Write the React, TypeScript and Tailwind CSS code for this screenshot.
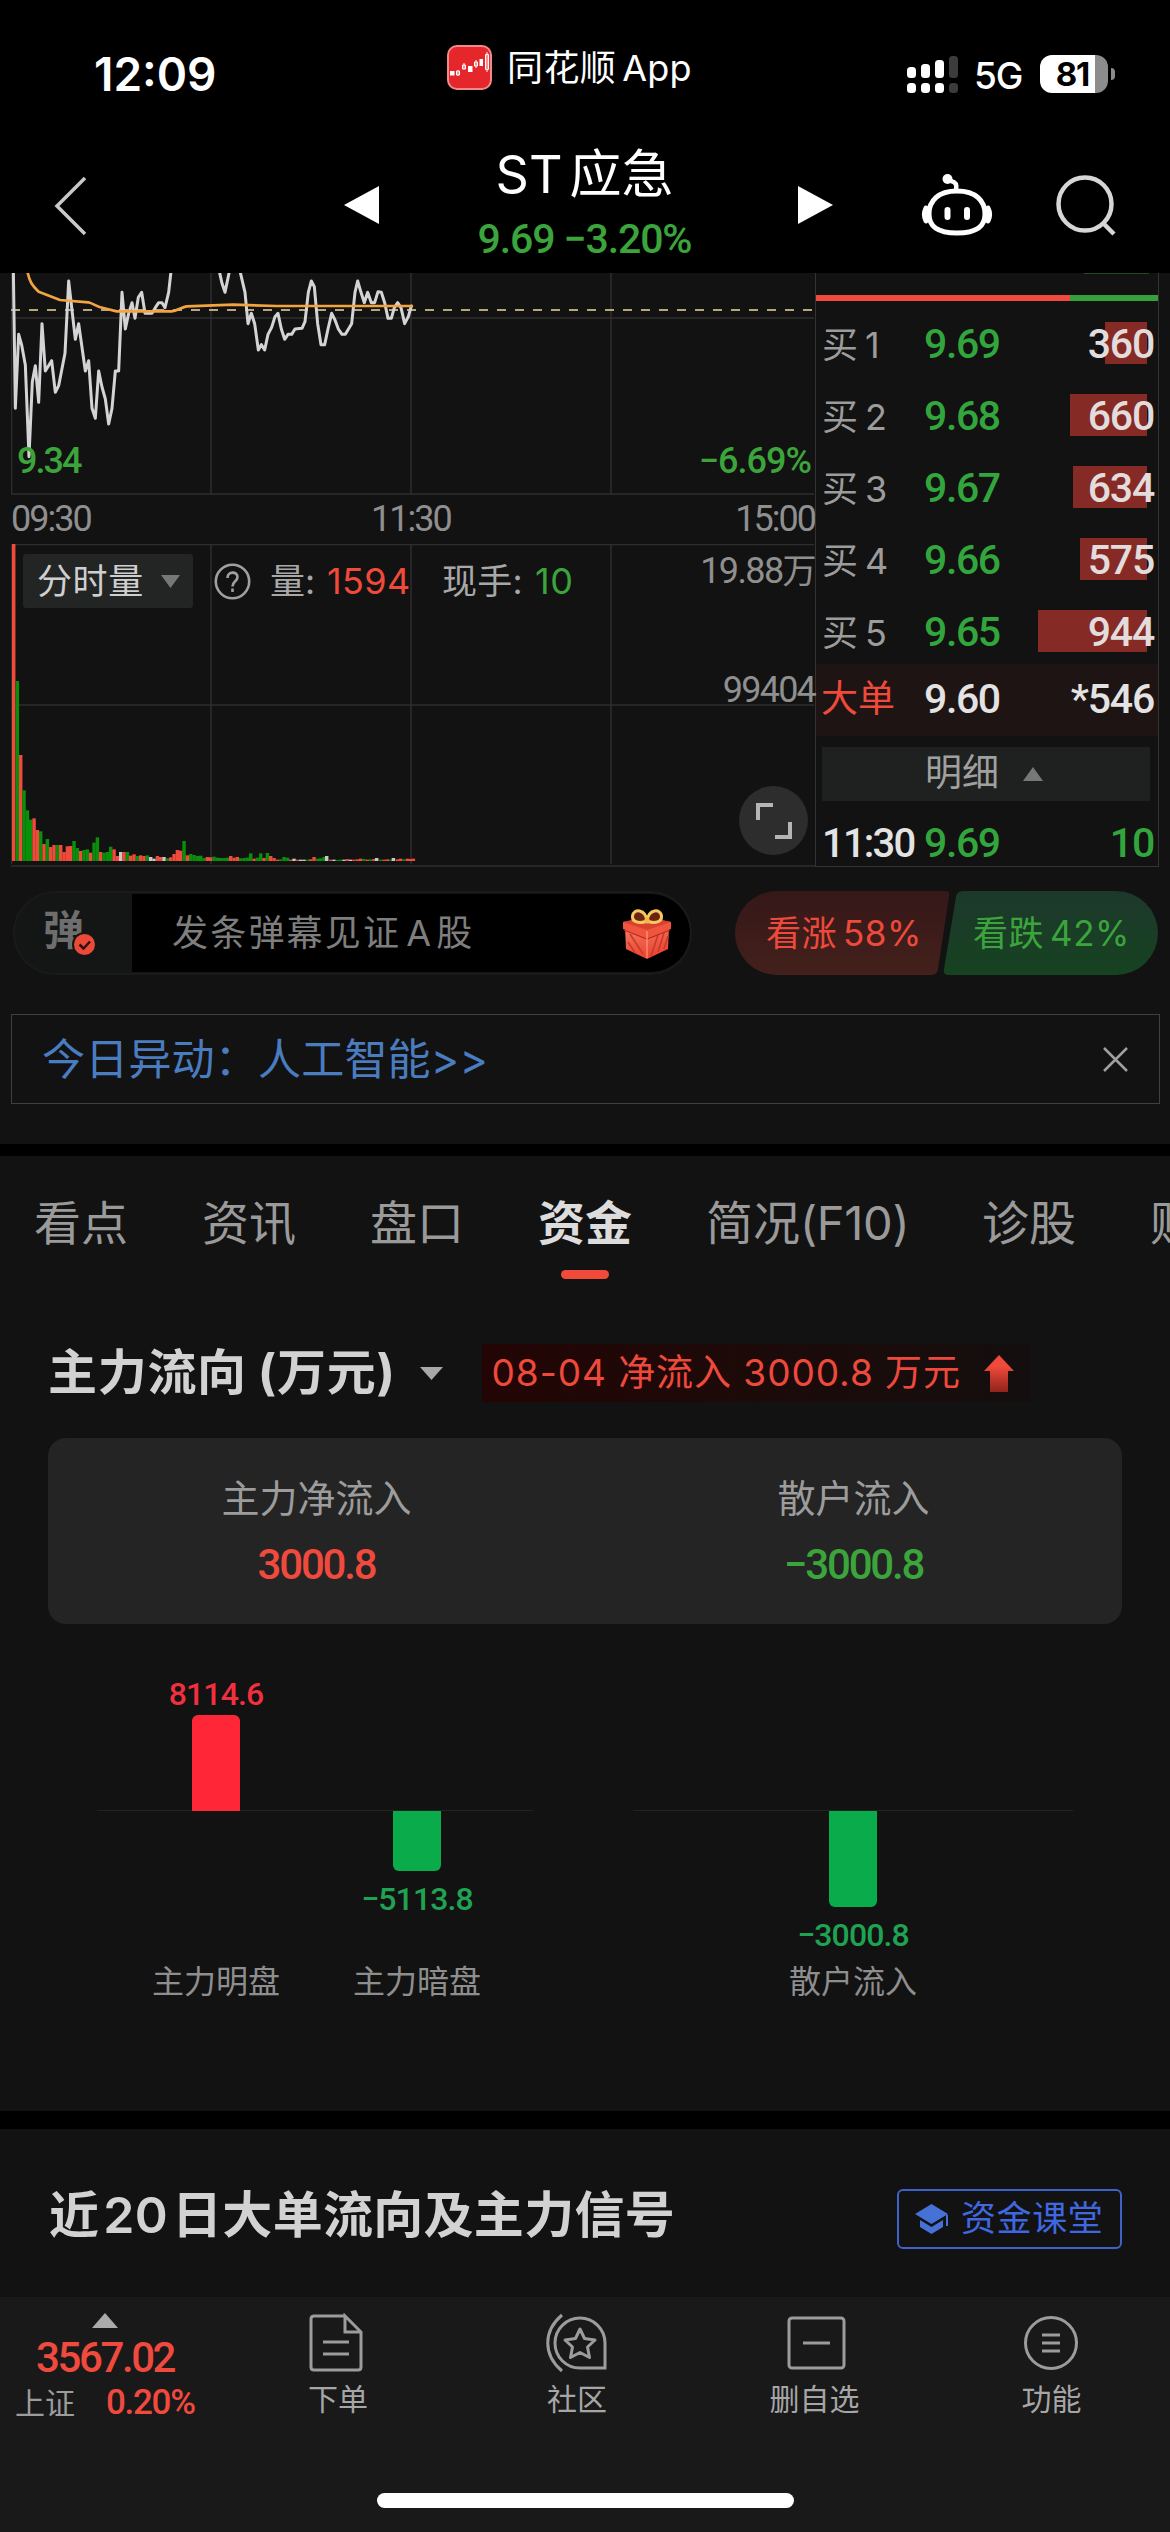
import type { ReactNode } from "react";

const CJK = "font-['Inter','Noto_Sans_CJK_SC',sans-serif]";
const NUM = "font-['Roboto','Noto_Sans_CJK_SC',sans-serif]";

const bids = [
  { n: "1", price: "9.69", vol: "360", bar: "w-[42px]" },
  { n: "2", price: "9.68", vol: "660", bar: "w-[77px]" },
  { n: "3", price: "9.67", vol: "634", bar: "w-[74px]" },
  { n: "4", price: "9.66", vol: "575", bar: "w-[67px]" },
  { n: "5", price: "9.65", vol: "944", bar: "w-[109px]" },
];

const R = "#f04a3a";
const G = "#0a8f0a";
const W = "#c8c8c8";

/* Minute volume bars: [left edge, top edge, colour] on a grid three times finer than the page */
const volume: [number, number, string][] = [
  [36, 42, R], [47, 453, G], [57, 675, R], [67, 781, G], [77, 841, G], [87, 869, G], [97, 865, R], [107, 900, R],
  [117, 904, G], [127, 942, R], [137, 927, G], [147, 951, R], [157, 945, R], [167, 945, G], [177, 945, R], [187, 966, R],
  [197, 949, R], [207, 948, R], [217, 933, G], [227, 954, G], [237, 963, R], [247, 960, G], [257, 958, G], [267, 968, R],
  [277, 938, G], [287, 922, G], [297, 966, R], [307, 968, G], [317, 966, G], [327, 950, G], [337, 958, R], [347, 978, R],
  [357, 966, W], [367, 966, R], [377, 966, G], [387, 977, R], [397, 973, R], [407, 978, G], [417, 976, R], [427, 978, R],
  [437, 976, G], [447, 981, W], [457, 986, W], [467, 978, R], [477, 981, R], [487, 981, W], [497, 985, G], [507, 982, R],
  [517, 972, R], [527, 960, R], [537, 962, R], [547, 933, G], [557, 976, R], [567, 972, G], [577, 975, G], [587, 978, G],
  [597, 977, G], [607, 984, G], [617, 981, R], [627, 982, R], [637, 980, G], [647, 983, G], [657, 984, G], [667, 984, G],
  [677, 983, G], [687, 978, R], [697, 983, R], [707, 981, R], [717, 985, G], [727, 984, G], [737, 983, G], [747, 970, G],
  [757, 986, R], [767, 983, G], [777, 970, G], [787, 984, R], [797, 969, G], [807, 978, R], [817, 984, R], [827, 989, R],
  [837, 988, G], [847, 981, G], [857, 983, G], [867, 989, R], [877, 986, W], [887, 989, R], [897, 989, W], [907, 989, W],
  [917, 989, G], [927, 988, R], [937, 981, R], [947, 986, G], [957, 985, G], [967, 981, G], [975, 978, W], [987, 989, R],
  [997, 989, W], [1007, 990, G], [1017, 989, G], [1027, 989, W], [1037, 987, R], [1047, 989, W], [1057, 989, R], [1067, 988, R],
  [1077, 986, R], [1087, 987, G], [1097, 989, R], [1107, 988, G], [1117, 987, R], [1125, 984, W], [1137, 989, G], [1147, 989, R],
  [1157, 988, R], [1167, 989, G], [1175, 984, W], [1187, 988, R], [1197, 986, R], [1207, 988, G], [1217, 986, R], [1227, 987, R],
  [1235, 986, R],
];

function StatusBar() {
  return (
    <div className="flex h-[136px] items-start bg-black text-white">
      <div className={`${CJK} ml-[94px] mt-[47px] w-[353px] text-[46px] font-semibold leading-[54px]`}>12:09</div>
      <svg className="mt-[45px] h-[45px] w-[45px]" viewBox="0 0 45 45">
        <rect x="1" y="1" width="43" height="43" rx="9" fill="#e5262b" stroke="#ef8a88" strokeWidth="2" />
        <g stroke="#fff" strokeWidth="1" fill="none">
          <path d="M11 25v6M17 18v6M29 15v8M40 7v20" />
          <path d="M9.500 26h3v4h-3zM15.500 20h3v4h-3zM27.500 17h3v4h-3zM38.500 9.500h3v15h-3z" />
        </g>
        <g fill="#fff"><rect x="3" y="26" width="4.500" height="4.500" /><rect x="21" y="21" width="4.500" height="6" /><rect x="32.500" y="14" width="3.500" height="7" /></g>
      </svg>
      <div className={`${CJK} ml-[15px] mt-[46px] w-[400px] text-[36px] leading-[44px] tracking-[0.4px]`}>同花顺<span className="ml-[6px] tracking-[0.2px]">App</span></div>
      <svg className="mt-[55px] h-[39px] w-[52px]" viewBox="0 0 52 39">
        <g fill="#fff">
          <rect x="0" y="12" width="9" height="11" rx="3.500" /><rect x="14" y="9" width="9" height="14" rx="3.500" /><rect x="28" y="5" width="9" height="18" rx="3.500" />
          <rect x="0" y="28" width="9" height="10" rx="3.500" /><rect x="14" y="28" width="9" height="10" rx="3.500" /><rect x="28" y="28" width="9" height="10" rx="3.500" />
        </g>
        <g fill="#3c3c3c"><rect x="42" y="1" width="9" height="22" rx="3.500" /><rect x="42" y="28" width="9" height="10" rx="3.500" /></g>
      </svg>
      <div className={`${CJK} ml-[15px] mt-[54px] w-[66px] text-[37px] font-medium leading-[44px] tracking-[-1px]`}>5G</div>
      <div className="mt-[55px] flex items-center">
        <div className="flex h-[38px] w-[68px] overflow-hidden rounded-[12px] bg-gradient-to-r from-white from-[81%] to-[#8c8c8c] to-[81%]">
          <span className={`${CJK} w-full pr-[3px] text-center text-[33px] font-bold leading-[38px] tracking-[-1px] text-black`}>81</span>
        </div>
        <div className="ml-[3px] h-[12px] w-[4px] rounded-r-full bg-[#8c8c8c]" />
      </div>
    </div>
  );
}

function NavBar() {
  return (
    <div className="flex h-[137px] items-start bg-black text-white">
      <svg className="ml-[52px] mt-[39px] h-[62px] w-[38px]" viewBox="0 0 38 62" fill="none" stroke="#c9c9c9" strokeWidth="3.500"><path d="M33 3 5 31l28 28" /></svg>
      <svg className="ml-[254px] mt-[50px] h-[38px] w-[35px]" viewBox="0 0 35 38"><path d="M35 0v38L0 19z" fill="#fff" /></svg>
      <div className="flex w-[419px] flex-col items-center pr-[8px]">
        <div className={`${CJK} mt-[8px] flex items-center text-[52px] leading-[62px]`}><span className="mr-[7px]">ST</span>应急</div>
        <div className={`${NUM} mt-[9px] text-[41px] font-medium leading-[48px] tracking-[-1.1px] text-[#3ba53c]`}>9.69 −3.20%</div>
      </div>
      <svg className="mt-[50px] h-[38px] w-[35px]" viewBox="0 0 35 38"><path d="M0 0v38l35-19z" fill="#fff" /></svg>
      <svg className="ml-[87px] mt-[36px] h-[66px] w-[74px]" viewBox="0 0 74 66" fill="none" stroke="#fff" strokeLinecap="round">
        <path strokeWidth="5" d="M37 19C18 19 9 29 9 42S18 61 37 61 65 55 65 42 56 19 37 19Z" />
        <path strokeWidth="4.500" d="M36 18c1-5 0-8-5-9" />
        <circle cx="27.500" cy="7" r="5" fill="#fff" stroke="none" />
        <path strokeWidth="5" d="M6 36c-2 4-2 9 0 13M68 36c2 4 2 9 0 13" />
        <path strokeWidth="6" d="M27.500 38v7M47 38v7" />
      </svg>
      <svg className="ml-[60px] mt-[38px] h-[64px] w-[64px]" viewBox="0 0 64 64" fill="none" stroke="#d6d6d6" strokeWidth="4.500"><circle cx="31" cy="30" r="26.500" /><path d="m49 49 11 11" /></svg>
    </div>
  );
}

function PriceChart() {
  return (
    <div className="relative h-[222px] w-[804px]">
      <svg className="h-full w-full" viewBox="11 273 804 222">
        <path stroke="#2e2e2e" strokeWidth="1.500" fill="none" d="M11.500 273V494H814M211 273V494M411 273V494M611 273V494M11 318H814" />
        <path stroke="#b8a67c" strokeWidth="2" strokeDasharray="9 9" d="M11 310H814" />
        <g transform="translate(0 265) scale(.33333)" fill="none" strokeLinejoin="round" strokeLinecap="round">
          <path stroke="#d4d4d6" strokeWidth="9" d="M40 10 46 430 56 208 65 240 76 300 87 575 97 350 106 302 116 412 126 176 136 318 155 287 166 382 176 362 195 265 206 48 226 223 236 176 256 318 266 287 276 430 286 460 296 318 306 366 316 402 326 477 336 430 346 318 356 318 366 82 376 192 386 145 396 113 405 160 415 97 425 82 435 145 456 145 466 128 476 113 486 113 495 128 506 82 514 10M656 10 666 55 675 82 690 10M718 10 735 82 744 176 754 145 764 176 775 255 784 239 794 255 804 208 815 187 825 155 834 145 844 192 854 223 864 208 875 208 885 192 906 190 915 170 925 82 934 48 943 65 953 176 963 239 974 239 984 192 995 145 1005 165 1015 192 1026 208 1036 208 1055 176 1065 82 1073 48 1083 82 1093 113 1103 82 1114 113 1124 113 1134 80 1144 82 1154 113 1164 160 1174 160 1183 128 1193 113 1203 128 1214 176 1225 155 1234 123" />
          <path stroke="#f2a440" strokeWidth="8" d="M80 10C88 50 95 60 116 80L180 105 265 112C285 118 290 125 310 129L350 139H515C535 137 545 126 560 124L700 119 830 123H1236" />
        </g>
      </svg>
      <span className={`${NUM} absolute left-[6px] top-[166px] text-[36px] font-medium leading-[44px] tracking-[-2px] text-[#3ba53c]`}>9.34</span>
      <span className={`${NUM} absolute right-[4px] top-[166px] text-[36px] font-medium leading-[44px] tracking-[-1px] text-[#3ba53c]`}>−6.69%</span>
    </div>
  );
}

function VolumeChart() {
  return (
    <div className="relative mt-[1px] h-[323px] w-[804px]">
      <svg className="h-full w-full" viewBox="11 544 804 323">
        <path stroke="#2e2e2e" strokeWidth="1.500" fill="none" d="M11.500 544.500V864M11 544.500H814M11 705H814M11 866H815M211 544V864M411 544V864M611 544V864" />
        <g transform="translate(0 530) scale(.33333)">
          {volume.map(([x, y, c]) => <rect key={x} x={x} y={y} width="10.300" height={993 - y} fill={c} />)}
        </g>
      </svg>
      <div className={`${CJK} absolute left-[12px] top-[10px] flex h-[54px] items-center text-[35px] text-[#9b9b9b]`}>
        <div className="flex h-[54px] w-[170px] items-center rounded-[3px] bg-[#232424] pl-[14px] tracking-[0.6px] text-[#cfcfcf]">
          分时量
          <svg className="ml-[17px] h-[13px] w-[19px]" viewBox="0 0 19 13"><path d="M0 0h19L9.500 13z" fill="#777" /></svg>
        </div>
        <svg className="ml-[21px] h-[37px] w-[37px]" viewBox="0 0 37 37" fill="none" stroke="#a0a0a0" strokeWidth="2.600"><circle cx="18.500" cy="18.500" r="16.700" /><path d="M13.500 15c0-7 10-7 10-1 0 4.500-5 4-5 9.500" /><path d="M18.500 25.500v3.500" /></svg>
        <span className="ml-[19px] w-[57px] text-[#a8a8a8]">量:</span>
        <span className="w-[115px] text-[36px] tracking-[0.4px] text-[#f04a3a]">1594</span>
        <span className="w-[93px] text-[#a8a8a8] tracking-[0.3px]">现手:</span>
        <span className="text-[36px] tracking-[0.5px] text-[#3ba53c]">10</span>
      </div>
      <span className={`${NUM} absolute right-0 top-[5px] text-[36px] leading-[44px] text-[#8f8f8f] tracking-[-1.6px]`}>19.88<span className="text-[34px]">万</span></span>
      <span className={`${NUM} absolute right-0 top-[124px] text-[36px] leading-[44px] text-[#8f8f8f] tracking-[-1.8px]`}>99404</span>
      <div className="absolute right-[7px] top-[242px] flex h-[69px] w-[69px] items-center justify-center rounded-full bg-[#2d2d2d]">
        <svg className="h-[36px] w-[36px]" viewBox="0 0 36 36" fill="none" stroke="#b5b5b5" strokeWidth="4"><path d="M2 17V2h15M34 19v15H19" /></svg>
      </div>
    </div>
  );
}

function OrderBook() {
  return (
    <div className={`${NUM} flex h-[594px] w-[344px] flex-col border-x border-b border-[#333] text-[41px] font-medium`}>
      <div className="ml-[268px] h-[22px] w-[65px] shrink-0 border-t border-[#1e4a24]" />
      <div className="flex h-[6px] shrink-0"><div className="w-[254px] bg-[#f04a3e]" /><div className="flex-1 bg-[#36a13c]" /></div>
      <div className="flex shrink-0 flex-col pt-[6px]">
        {bids.map((b) => (
          <div key={b.n} className="relative flex h-[72px] items-center pt-[3px]">
            <div className={`absolute right-[11px] top-[15px] h-[42px] bg-[#862a25] ${b.bar}`} />
            <span className={`${CJK} ml-[6px] w-[102px] text-[36px] font-normal text-[#9c9c9c]`}>买<span className="ml-[7px]">{b.n}</span></span>
            <span className="tracking-[-1.4px] text-[#32a63c]">{b.price}</span>
            <span className="relative ml-auto mr-[4px] tracking-[-1.2px] text-[#e3dcdc]">{b.vol}</span>
          </div>
        ))}
      </div>
      <div className="mt-[-3px] flex h-[72px] shrink-0 items-center bg-[#1f1414] text-[#e3e3e3]">
        <span className="w-[108px] pl-[5px] text-[37px] font-normal text-[#f04a3a]">大单</span>
        <span className="tracking-[-1.4px]">9.60</span>
        <span className="ml-auto mr-[4px] tracking-[-1.2px]">*546</span>
      </div>
      <div className="ml-[6px] mt-[11px] flex h-[54px] w-[328px] shrink-0 items-center bg-[#1f2020] pl-[103px] text-[37px] font-normal text-[#a0a0a0]">
        明细
        <svg className="ml-[24px] h-[14px] w-[20px]" viewBox="0 0 20 14"><path d="M10 0 20 14H0z" fill="#777" /></svg>
      </div>
      <div className="mt-[18px] flex h-[47px] shrink-0 items-center pt-[3px] text-[#e3e3e3]">
        <span className="w-[108px] pl-[6px] text-[40px] tracking-[-1.8px]">11:30</span>
        <span className="tracking-[-1.4px] text-[#32a63c]">9.69</span>
        <span className="ml-auto mr-[4px] tracking-[-1.2px] text-[#32a63c]">10</span>
      </div>
    </div>
  );
}

function Gift() {
  return (
    <svg className="ml-auto mr-[18px] h-[54px] w-[50px]" viewBox="0 0 50 54">
      <defs><linearGradient id="gift" x1="0" y1="0" x2="0.300" y2="1"><stop offset="0" stopColor="#f67a5c" /><stop offset="1" stopColor="#ea4432" /></linearGradient></defs>
      <path d="M3 21 25 29l22-8-1 22-21 10L4 43z" fill="url(#gift)" />
      <g stroke="#c93a2c" strokeWidth="1.600"><path d="m29 50 7-21M36 46l6-19M42 43l4-13M6 36l7 11M8 28l13 20" /></g>
      <path d="M1 16 25 11l24 5v7l-24 9L1 23z" fill="#f0553f" />
      <path d="M1 16 25 11l24 5-24 8z" fill="#d8412f" />
      <path d="m2 24 23 9 23-9" fill="none" stroke="#b92a20" strokeWidth="1.300" />
      <path d="M25 25v27" stroke="#ff9a80" strokeWidth="1.200" />
      <g fill="#6b2410" stroke="#f6c860" strokeWidth="3"><path d="M25 15C17 18 10 16 10.500 10c1-8 13-7 14.500 5Z" /><path d="M25 15c8 3 15 1 14.500-5-1-8-13-7-14.500 5Z" /></g>
      <rect x="22.500" y="11.500" width="5" height="6" rx="2" fill="#f2b548" />
    </svg>
  );
}

function DanmuRow() {
  return (
    <div className={`${CJK} flex h-[84px] items-center text-[35px]`}>
      <div className="ml-[13px] flex h-[84px] w-[679px] items-center rounded-full border-[2px] border-[#191a1a] bg-[#141515]">
        <div className="relative flex h-full w-[117px] items-center pl-[28px] text-[41px] font-bold text-[#6e6e6e]">
          <span className="relative top-[-2px]">弹</span>
          <svg className="absolute left-[57px] top-[39px] h-[25px] w-[25px]" viewBox="0 0 25 25"><circle cx="12.500" cy="12.500" r="11.500" fill="#ea4a38" stroke="#161616" strokeWidth="2" /><path d="m7.500 12.500 4 4 6.500-7" fill="none" stroke="#301010" strokeWidth="2.500" /></svg>
        </div>
        <div className="flex h-[78px] flex-1 items-center rounded-r-full bg-black pl-[40px] text-[36px] text-[#7e7e7e]">
          <span className="whitespace-nowrap tracking-[2.200px]">发条弹幕见证<span className="ml-[5px] mr-[3px]">A</span>股</span>
          <Gift />
        </div>
      </div>
      <div className="relative ml-[43px] flex h-[84px] w-[423px] items-center">
        <svg className="absolute inset-0" width="423" height="84" viewBox="0 0 423 84">
          <defs>
            <linearGradient id="up" x1="0" y1="0" x2="0" y2="1"><stop offset="0" stopColor="#361819" /><stop offset="1" stopColor="#43201b" /></linearGradient>
            <linearGradient id="down" x1="0" y1="0" x2="0" y2="1"><stop offset="0" stopColor="#1d382b" /><stop offset="1" stopColor="#164321" /></linearGradient>
          </defs>
          <path d="M42 0H210q5 0 4 5L203 78q-1 6-7 6H42a42 42 0 0 1 0-84Z" fill="url(#up)" />
          <path d="M228 0H381a42 42 0 0 1 0 84H213q-5 0-4-6L221 6q1-6 7-6Z" fill="url(#down)" />
        </svg>
        <span className="relative ml-[31px] w-[207px] tracking-[0.5px] text-[#ee4a3c]">看涨<span className="ml-[6px]">58%</span></span>
        <span className="relative tracking-[0.5px] text-[#3ba53c]">看跌<span className="ml-[6px]">42%</span></span>
      </div>
    </div>
  );
}

function Tabs() {
  const tab = "text-[#9a9a9a]";
  return (
    <div className={`${CJK} flex h-[124px] items-start overflow-hidden whitespace-nowrap pl-[34px] pt-[38px] text-[47px] leading-[58px]`}>
      <span className={`${tab} w-[168px] shrink-0`}>看点</span>
      <span className={`${tab} w-[168px] shrink-0`}>资讯</span>
      <span className={`${tab} w-[168px] shrink-0`}>盘口</span>
      <div className="flex w-[168px] shrink-0 flex-col font-bold text-[#dcdcdc]">
        <span>资金</span>
        <div className="ml-[23px] mt-[18px] h-[9px] w-[48px] rounded-full bg-[#f04a3a]" />
      </div>
      <span className={`${tab} w-[276px] shrink-0`}>简况<span className="tracking-[-0.3px]">(F10)</span></span>
      <span className={`${tab} w-[168px] shrink-0`}>诊股</span>
      <span className={`${tab} shrink-0`}>财务</span>
    </div>
  );
}

function Stat({ label, value, color }: { label: string; value: string; color: string }) {
  return (
    <div className="flex flex-1 flex-col items-center">
      <span className={`${CJK} mt-[37px] text-[38px] leading-[46px] text-[#9c9c9c]`}>{label}</span>
      <span className={`${NUM} mt-[20px] text-[42px] font-medium leading-[48px] tracking-[-2.2px] ${color}`}>{value}</span>
    </div>
  );
}

function FlowColumn({ above, value, bar, color, label }: { above: boolean; value: string; bar: string; color: string; label: string }) {
  const text = <span className={`${NUM} text-[32px] font-medium leading-[36px] tracking-[-0.9px] ${color}`}>{value}</span>;
  return (
    <div className="relative flex h-[346px] w-[140px] flex-col items-center">
      <div className="flex h-[147px] flex-col items-center justify-end">
        {above && <>{text}<div className={`mt-[3px] w-[48px] rounded-t-[6px] ${bar}`} /></>}
      </div>
      <div className="flex h-[151px] flex-col items-center">
        {!above && <><div className={`w-[48px] rounded-b-[6px] ${bar}`} /><div className="mt-[10px] flex">{text}</div></>}
      </div>
      <span className={`${CJK} whitespace-nowrap text-[32px] leading-[40px] text-[#8e8e8e]`}>{label}</span>
    </div>
  );
}

function FlowSection() {
  return (
    <div className="h-[831px]">
      <div className={`${CJK} flex h-[58px] items-center pl-[48px]`}>
        <span className="text-[49px] font-bold tracking-[0.7px] text-[#d2d2d2]">主力流向<span className="ml-[11px]">(</span>万元)</span>
        <svg className="ml-[24px] h-[13px] w-[23px] shrink-0" viewBox="0 0 23 13"><path d="M0 0h23L11.500 13z" fill="#a8a8a8" /></svg>
        <div className="ml-[39px] flex h-[58px] w-[549px] items-center bg-gradient-to-r from-[#230505] to-[#140e0e] pl-[10px] text-[37px] text-[#ee4a3c]">
          <span className="whitespace-nowrap tracking-[0.95px]">08-04 净流入 3000.8 万元</span>
          <svg className="ml-[23px] h-[37px] w-[30px] shrink-0" viewBox="0 0 30 37">
            <defs><linearGradient id="arrow" x1="0" y1="0" x2="0" y2="1"><stop offset="0.300" stopColor="#f04a3a" /><stop offset="1" stopColor="#8f241b" /></linearGradient></defs>
            <path d="M15 0 30 16h-6v21H6V16H0z" fill="url(#arrow)" />
          </svg>
        </div>
      </div>
      <div className="ml-[48px] mt-[36px] flex h-[186px] w-[1074px] rounded-[18px] bg-[#242424]">
        <Stat label="主力净流入" value="3000.8" color="text-[#f04a3e]" />
        <Stat label="散户流入" value="−3000.8" color="text-[#3ba53c]" />
      </div>
      <div className="mt-[40px] flex pl-[97px]">
        <div className="relative flex w-[436px] gap-[61px] pl-[49px]">
          <div className="absolute left-0 top-[146px] h-[1px] w-full bg-[#232323]" />
          <FlowColumn above value="8114.6" bar="h-[96px] bg-[#ff2638]" color="text-[#f0303e]" label="主力明盘" />
          <FlowColumn above={false} value="−5113.8" bar="h-[60px] bg-[#0aab4b]" color="text-[#1fa352]" label="主力暗盘" />
        </div>
        <div className="relative ml-[100px] flex w-[440px] justify-center">
          <div className="absolute left-0 top-[146px] h-[1px] w-full bg-[#232323]" />
          <FlowColumn above={false} value="−3000.8" bar="h-[96px] bg-[#0aab4b]" color="text-[#1fa352]" label="散户流入" />
        </div>
      </div>
    </div>
  );
}

function BottomItem({ label, children, w }: { label: string; children: ReactNode; w: string }) {
  return (
    <div className={`flex shrink-0 flex-col items-center pt-[16px] ${w}`}>
      <svg className="h-[60px] w-[64px]" viewBox="0 0 64 60" fill="none" stroke="#9c9c9c" strokeWidth="3">{children}</svg>
      <span className="mt-[8px] text-[30px] leading-[36px] text-[#a6a6a6]">{label}</span>
    </div>
  );
}

function BottomBar() {
  return (
    <div className={`${CJK} flex h-[235px] flex-col bg-[#191919]`}>
      <div className="flex h-[196px] items-start">
        <div className="flex w-[230px] flex-col">
          <svg className="ml-[92px] mt-[16px] h-[15px] w-[26px]" viewBox="0 0 26 15"><path d="M13 0 26 15H0z" fill="#ababab" /></svg>
          <span className={`${NUM} ml-[36px] mt-[6px] text-[42px] font-medium leading-[48px] tracking-[-2.4px] text-[#f04a3e]`}>3567.02</span>
          <div className="flex items-center pl-[15px] pt-[1px] leading-[40px]">
            <span className="w-[91px] text-[30px] text-[#9c9c9c]">上证</span>
            <span className={`${NUM} text-[35px] font-medium tracking-[-1.3px] text-[#f04a3e]`}>0.20%</span>
          </div>
        </div>
        <BottomItem label="下单" w="w-[216px]">
          <path d="M39 3H8q-3 0-3 3v48q0 3 3 3h44q3 0 3-3V19L39 3v16h16M17 29h26M17 41h26" />
        </BottomItem>
        <BottomItem label="社区" w="w-[262px]">
          <path d="M17 2C-2 18-2 42 17 58" />
          <path d="M35 5a25 25 0 0 0-25 25c0 14 11 25 25 25h25V30A25 25 0 0 0 35 5Z" />
          <path strokeLinejoin="round" d="m35 16 4.500 9.500 10.500 1.500-7.500 7 2 10.500-9.500-5-9.500 5 2-10.500-7.500-7 10.500-1.500z" />
        </BottomItem>
        <BottomItem label="删自选" w="w-[213px]">
          <rect x="6" y="5" width="55" height="50" rx="3" /><path d="M20 30h27" />
        </BottomItem>
        <BottomItem label="功能" w="w-[249px] pl-[12px]">
          <circle cx="31" cy="30" r="25.500" /><path d="M22 22h18M22 30h18M22 38h18" />
        </BottomItem>
      </div>
      <div className="ml-[377px] h-[15px] w-[417px] rounded-full bg-white" />
    </div>
  );
}

export default function App() {
  return (
    <div className="flex h-[2532px] w-[1170px] flex-col overflow-hidden bg-[#121212]">
      <StatusBar />
      <NavBar />
      <div className="flex h-[618px] pl-[11px]">
        <div className="w-[804px]">
          <PriceChart />
          <div className={`${NUM} flex h-[48px] items-center text-[36px] tracking-[-2px] text-[#8f8f8f]`}>
            <span className="w-[360px]">09:30</span>
            <span>11:30</span>
            <span className="ml-auto">15:00</span>
          </div>
          <VolumeChart />
        </div>
        <OrderBook />
      </div>
      <DanmuRow />
      <div className={`${CJK} ml-[11px] mt-[39px] flex h-[90px] w-[1149px] items-center border border-[#3d403d] pl-[30px] text-[43px] tracking-[0.2px] text-[#4a7cc0]`}>
        今日异动：人工智能&gt;&gt;
        <svg className="ml-auto mr-[31px] h-[25px] w-[25px]" viewBox="0 0 25 25" stroke="#a0a0a0" strokeWidth="2.500"><path d="m1 1 23 23M24 1 1 24" /></svg>
      </div>
      <div className="mt-[40px] h-[12px] bg-black" />
      <Tabs />
      <div className="h-[64px]" />
      <FlowSection />
      <div className="mt-[-64px] h-[18px] bg-black" />
      <div className={`${CJK} flex h-[168px] items-center justify-between pl-[49px] pr-[48px]`}>
        <span className="mt-[5px] text-[50px] font-bold tracking-[0.3px] text-[#d2d2d2]">近<span className="mx-[4px] font-semibold">20</span>日大单流向及主力信号</span>
        <div className="mt-[11px] flex h-[60px] w-[225px] items-center rounded-[6px] border-[2px] border-[#3f62c8] pl-[15px] text-[35px] text-[#3f68e0]">
          <svg className="mr-[12px] h-[32px] w-[35px] shrink-0" viewBox="0 0 35 32" fill="#4672d8"><path d="M17.500 1 34 11 17.500 21 1 11z" /><path d="m6 17 11.500 7L29 17v7l-11.500 7L6 24zM32 12h2v11h-2z" /></svg>
          <span className="whitespace-nowrap tracking-[0.6px]">资金课堂</span>
        </div>
      </div>
      <BottomBar />
    </div>
  );
}
